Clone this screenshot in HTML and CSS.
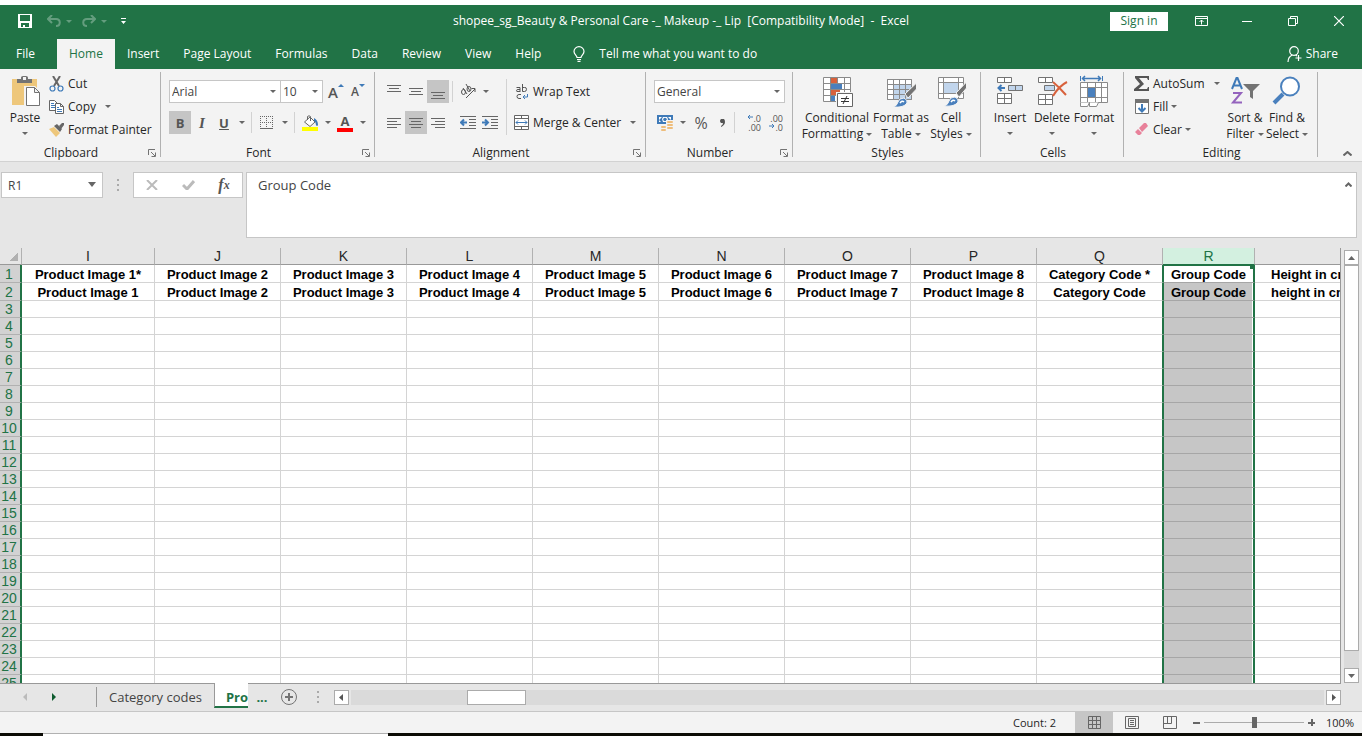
FILE: index.html
```html
<!DOCTYPE html>
<html lang="en">
<head>
    <meta charset="UTF-8">
    <meta name="viewport" content="width=device-width, initial-scale=1.0">
    <title>shopee_sg_Beauty &amp; Personal Care - Excel</title>
    <link rel="stylesheet" href="styles.css">
</head>
<body>
    <div class="window">
        <header class="titlebar">
            <div class="quick">
                <button class="quick-btn save" aria-label="Save">
                    <svg width="14" height="14" viewBox="0 0 14 14"><path fill="#fff" fill-rule="evenodd" d="M0 0h14v14H0zM2 1v6h10V1zM3 9v4h2v-2h2v2h4V9z"/></svg>
                </button>
                <button class="quick-btn dim" aria-label="Undo">
                    <svg width="14" height="12" viewBox="0 0 14 12" fill="none" stroke="#fff" stroke-width="2"><path d="M5 0L1 4l4 4M1 4h8c5 0 5 7 0 7"/></svg>
                    <span class="caret"></span>
                </button>
                <button class="quick-btn dim" aria-label="Redo">
                    <svg width="14" height="12" viewBox="0 0 14 12" fill="none" stroke="#fff" stroke-width="2"><path d="M9 0l4 4-4 4M13 4H5c-5 0-5 7 0 7"/></svg>
                    <span class="caret"></span>
                </button>
                <button class="quick-btn more" aria-label="Customize Quick Access Toolbar">
                    <svg width="6" height="6" viewBox="0 0 6 6" fill="#fff"><path d="M0 0h5v1H0zM0 3h5L2.500 6z"/></svg>
                </button>
            </div>
            <div class="title">shopee_sg_Beauty &amp; Personal Care -_ Makeup -_ Lip&nbsp; [Compatibility Mode]&nbsp; -&nbsp; Excel</div>
            <div class="window-tools">
                <button class="signin">Sign in</button>
                <button class="window-btn" aria-label="Ribbon Display Options">
                    <svg width="13" height="10" viewBox="0 0 13 10" fill="none" stroke="#fff"><path d="M.5.5h12v9H.5zM.5 2.500h12M6.500 8.500V4M4.500 6l2-2 2 2"/></svg>
                </button>
                <button class="window-btn" aria-label="Minimize">
                    <svg width="10" height="10" viewBox="0 0 10 10" fill="none" stroke="#fff"><path d="M0 5.500h10"/></svg>
                </button>
                <button class="window-btn" aria-label="Restore">
                    <svg width="10" height="10" viewBox="0 0 10 10" fill="none" stroke="#fff"><path d="M.5 2.500h7v7h-7zM2.500 2V.5h7v7H8"/></svg>
                </button>
                <button class="window-btn" aria-label="Close">
                    <svg width="10" height="10" viewBox="0 0 10 10" fill="none" stroke="#fff" stroke-width="1.200"><path d="M0 0l10 10M10 0L0 10"/></svg>
                </button>
            </div>
        </header>

        <nav class="tabs">
            <a class="tab file" href="#">File</a>
            <a class="tab active" href="#">Home</a>
            <a class="tab" href="#">Insert</a>
            <a class="tab" href="#">Page Layout</a>
            <a class="tab" href="#">Formulas</a>
            <a class="tab" href="#">Data</a>
            <a class="tab" href="#">Review</a>
            <a class="tab" href="#">View</a>
            <a class="tab" href="#">Help</a>
            <a class="tab tell" href="#">
                <svg width="12" height="16" viewBox="0 0 12 16" fill="none" stroke="#fff" stroke-width="1.200"><path d="M4 11.500c0-2-3-3-3-6a5 4.800 0 0 1 10 0c0 3-3 4-3 6zM4 13.500h4M4.500 15.400h3"/></svg>
                Tell me what you want to do
            </a>
            <a class="tab share" href="#">
                <svg width="15" height="16" viewBox="0 0 15 16" fill="none" stroke="#fff" stroke-width="1.200"><circle cx="7" cy="5" r="4.300"/><path d="M1 16c0-4 2-6 4.500-7M8.500 9l1.500 1M11.500 9v6M8.500 12h6"/></svg>
                Share
            </a>
        </nav>

        <div class="ribbon">
            <section class="group">
                <div class="group-body">
                    <button class="big-btn paste">
                        <svg width="30" height="32" viewBox="0 0 30 32"><path fill="#eec77b" d="M2 4h25v26H2z"/><path fill="#737373" d="M7 8V4h4V2.500Q11 1 13 1h3q2 0 2 1.500V4h4v4z"/><path fill="#f3f3f3" d="M13 2h3v3h-3z"/><path fill="#f3f3f3" d="M14 11h11l5 5v16H14z"/><path fill="#fff" stroke="#737373" d="M16.500 12.500h8l5 5v13h-13zM24.500 12.500v5h5"/></svg>
                        Paste
                        <span class="caret"></span>
                    </button>
                    <div class="stack">
                        <button class="small-btn">
                            <svg width="16" height="16" viewBox="0 0 16 16" fill="none"><path stroke="#666" stroke-width="2" d="M4 0l6 10M11 0L5 10"/><circle cx="3.500" cy="12.500" r="2.500" stroke="#3f7ab8" stroke-width="1.200"/><circle cx="11.500" cy="12.500" r="2.500" stroke="#3f7ab8" stroke-width="1.200"/></svg>
                            Cut
                        </button>
                        <button class="small-btn copy">
                            <svg width="16" height="16" viewBox="0 0 16 16" fill="#fff"><path stroke="#666" d="M.5 1.500h5l3 3v7h-8z"/><path stroke="#3f7ab8" d="M2 4.500h3M2 6.500h4M2 8.500h4"/><path stroke="#666" d="M6.500 4.500h5l3 3v7h-8zM11.500 4.500v3h3"/><path stroke="#3f7ab8" d="M8 8.500h2M8 10.500h5M8 12.500h5"/></svg>
                            Copy
                            <span class="caret"></span>
                        </button>
                        <button class="small-btn">
                            <svg width="16" height="16" viewBox="0 0 16 16"><path fill="#eec77b" d="M0 7l5-2 6 6-4 4z"/><path fill="#666" d="M5 4l3-2 5 5-2 3z"/><path fill="#666" d="M10 4l3-3h2v2l-3 4z"/></svg>
                            Format Painter
                        </button>
                    </div>
                </div>
                <div class="group-label">
                    <span>Clipboard</span>
                    <button aria-label="Clipboard settings"><svg width="8" height="8" viewBox="0 0 8 8" fill="none" stroke="#737373"><path d="M.5 6V.5H7M3 3l4 4M7.500 3.500v4h-4"/></svg></button>
                </div>
            </section>

            <section class="group">
                <div class="group-body rows">
                    <div class="row">
                        <div class="combo font-name"><select aria-label="Font"><option>Arial</option></select></div>
                        <div class="combo font-size"><select aria-label="Font size"><option>10</option></select></div>
                        <button class="icon-btn grow" aria-label="Increase font size">A<svg width="6" height="3" viewBox="0 0 6 3"><path fill="#3f7ab8" d="M0 3l3-3 3 3z"/></svg></button>
                        <button class="icon-btn shrink" aria-label="Decrease font size">A<svg width="6" height="3" viewBox="0 0 6 3"><path fill="#3f7ab8" d="M0 0l3 3 3-3z"/></svg></button>
                    </div>
                    <div class="row">
                        <button class="icon-btn on" aria-label="Bold"><b>B</b></button>
                        <button class="icon-btn" aria-label="Italic"><i>I</i></button>
                        <button class="icon-btn" aria-label="Underline"><u>U</u></button>
                        <button class="drop-btn" aria-label="Underline options"><span class="caret"></span></button>
                        <span class="sep"></span>
                        <button class="icon-btn" aria-label="Borders">
                            <svg width="14" height="14" viewBox="0 0 14 14" fill="none" stroke="#666"><path stroke-dasharray="1 1" d="M0 .5h13M0 6.500h13M.5 0v12M6.500 0v12M12.500 0v12"/><path d="M0 12.500h13"/></svg>
                        </button>
                        <button class="drop-btn" aria-label="Border options"><span class="caret"></span></button>
                        <span class="sep"></span>
                        <button class="icon-btn" aria-label="Fill color">
                            <svg width="16" height="16" viewBox="0 0 16 16"><path fill="#ff0" d="M0 12h16v4H0z"/><path fill="#fff" stroke="#666" d="M2.500 7L8 2l5 5-5 4.500z"/><path fill="none" stroke="#666" d="M5.500 5V1.500Q7 0 8.500 1.500V6"/><path fill="#3f7ab8" d="M12 3q4 2 4 7-1 2-2 0 0-3-2-4z"/></svg>
                        </button>
                        <button class="drop-btn" aria-label="Fill color options"><span class="caret"></span></button>
                        <button class="icon-btn font-color" aria-label="Font color"><b>A</b></button>
                        <button class="drop-btn" aria-label="Font color options"><span class="caret"></span></button>
                    </div>
                </div>
                <div class="group-label">
                    <span>Font</span>
                    <button aria-label="Font settings"><svg width="8" height="8" viewBox="0 0 8 8" fill="none" stroke="#737373"><path d="M.5 6V.5H7M3 3l4 4M7.500 3.500v4h-4"/></svg></button>
                </div>
            </section>

            <section class="group">
                <div class="group-body align">
                    <div class="rows">
                        <div class="row">
                            <button class="icon-btn" aria-label="Top align"><svg width="14" height="14" viewBox="0 0 14 14" stroke="#666"><path d="M0 .5h14M2 3.500h10M0 6.500h14"/></svg></button>
                            <button class="icon-btn" aria-label="Middle align"><svg width="14" height="14" viewBox="0 0 14 14" stroke="#666"><path d="M0 3.500h14M2 6.500h10M0 9.500h14"/></svg></button>
                            <button class="icon-btn on" aria-label="Bottom align"><svg width="14" height="14" viewBox="0 0 14 14" stroke="#666"><path d="M0 7.500h14M2 10.500h10M0 13.500h14"/></svg></button>
                            <span class="sep"></span>
                            <button class="icon-btn" aria-label="Orientation">
                                <svg width="16" height="16" viewBox="0 0 16 16" fill="none" stroke="#555"><ellipse cx="3.500" cy="8" rx="2" ry="2.500"/><path d="M3 4l4 6M6 0l4 7"/><ellipse cx="9" cy="5" rx="2" ry="2.500"/><path d="M6 14l9-9M11.500 4.500H15V8"/></svg>
                            </button>
                            <button class="drop-btn" aria-label="Orientation options"><span class="caret"></span></button>
                        </div>
                        <div class="row">
                            <button class="icon-btn" aria-label="Align left"><svg width="14" height="12" viewBox="0 0 14 12" stroke="#666"><path d="M0 1.500h14M0 4.500h10M0 7.500h14M0 10.500h10"/></svg></button>
                            <button class="icon-btn on" aria-label="Center"><svg width="14" height="12" viewBox="0 0 14 12" stroke="#666"><path d="M0 1.500h14M2 4.500h10M0 7.500h14M2 10.500h10"/></svg></button>
                            <button class="icon-btn" aria-label="Align right"><svg width="14" height="12" viewBox="0 0 14 12" stroke="#666"><path d="M0 1.500h14M4 4.500h10M0 7.500h14M4 10.500h10"/></svg></button>
                            <span class="sep blank"></span>
                            <button class="icon-btn" aria-label="Decrease indent">
                                <svg width="16" height="13" viewBox="0 0 16 13" fill="none" stroke="#666"><path d="M0 .5h16M9 3.500h7M9 6.500h7M9 9.500h7M0 12.500h16"/><path stroke="#3f7ab8" stroke-width="2" d="M7 6.500H1M4 3.500l-3 3 3 3"/></svg>
                            </button>
                            <button class="icon-btn" aria-label="Increase indent">
                                <svg width="16" height="13" viewBox="0 0 16 13" fill="none" stroke="#666"><path d="M0 .5h16M9 3.500h7M9 6.500h7M9 9.500h7M0 12.500h16"/><path stroke="#3f7ab8" stroke-width="2" d="M0 6.500h6M3 3.500l3 3-3 3"/></svg>
                            </button>
                        </div>
                    </div>
                    <span class="sep tall"></span>
                    <div class="rows">
                        <button class="small-btn">
                            <svg width="16" height="16" viewBox="0 0 16 16" fill="none" stroke="#555"><path d="M2.500 3.500h3.500V8M6 5.500H4q-1.500 0-1.500 1.200T4 7.500h2M8.500 0v7.500h2q2 0 2-2.200T10.500 3.500h-2M7 10.500H5q-2 0-2 2t2 2h2"/><path stroke="#3f7ab8" d="M13.500 10v3H9M11 11l-2 2 2 2"/></svg>
                            Wrap Text
                        </button>
                        <button class="small-btn merge">
                            <svg width="16" height="16" viewBox="0 0 16 16" fill="#fff" stroke="#666"><path d="M.5.500h14v14H.5zM.5 3.500h14M.5 11.500h14M7.500 0v3M7.500 12v3"/><path fill="none" stroke="#3f7ab8" d="M2 7.500h11M4 5.500l-2 2 2 2M11 5.500l2 2-2 2"/></svg>
                            Merge &amp; Center
                            <span class="caret"></span>
                        </button>
                    </div>
                </div>
                <div class="group-label">
                    <span>Alignment</span>
                    <button aria-label="Alignment settings"><svg width="8" height="8" viewBox="0 0 8 8" fill="none" stroke="#737373"><path d="M.5 6V.5H7M3 3l4 4M7.500 3.500v4h-4"/></svg></button>
                </div>
            </section>

            <section class="group">
                <div class="group-body rows">
                    <div class="row">
                        <div class="combo number-format"><select aria-label="Number format"><option>General</option></select></div>
                    </div>
                    <div class="row">
                        <button class="icon-btn" aria-label="Accounting format">
                            <svg width="17" height="17" viewBox="0 0 17 17"><path fill="#3f7ab8" d="M0 1h16v9H0z"/><path fill="#fff" d="M2 3h3L2 6zM14 3h-3l3 3zM2 8h2L2 6zM6 3h4l1 2-1 3H6L5 5z"/><circle cx="8" cy="5.500" r="1.800" fill="#3f7ab8"/><path fill="#f3f3f3" d="M9 6h8v9H9v2H3v-6h6z"/><rect x="10" y="7" width="6" height="2" rx="1" fill="#eebd7b"/><rect x="10" y="10" width="6" height="2" rx="1" fill="#eebd7b"/><rect x="10" y="13" width="6" height="2" rx="1" fill="#eebd7b"/><rect x="4" y="12" width="5" height="2" rx="1" fill="#eebd7b"/><rect x="4" y="15" width="5" height="2" rx="1" fill="#eebd7b"/></svg>
                        </button>
                        <button class="drop-btn" aria-label="Accounting options"><span class="caret"></span></button>
                        <button class="icon-btn percent" aria-label="Percent style">%</button>
                        <button class="icon-btn comma" aria-label="Comma style"><svg width="5" height="8" viewBox="0 0 5 8"><path fill="#555" d="M1 0h3q1 1 1 3 0 3-4 5V7q2-1 2-3H1q-1-1-1-2t1-2z"/></svg></button>
                        <span class="sep"></span>
                        <button class="icon-btn decimal" aria-label="Increase decimal"><span><svg width="6" height="6" viewBox="0 0 6 6" fill="none" stroke="#3f7ab8"><path d="M6 3H1M3 1L1 3l2 2"/></svg>.0</span><span>.00</span></button>
                        <button class="icon-btn decimal" aria-label="Decrease decimal"><span>.00</span><span><svg width="6" height="6" viewBox="0 0 6 6" fill="none" stroke="#3f7ab8"><path d="M0 3h5M3 1l2 2-2 2"/></svg>.0</span></button>
                    </div>
                </div>
                <div class="group-label">
                    <span>Number</span>
                    <button aria-label="Number settings"><svg width="8" height="8" viewBox="0 0 8 8" fill="none" stroke="#737373"><path d="M.5 6V.5H7M3 3l4 4M7.500 3.500v4h-4"/></svg></button>
                </div>
            </section>

            <section class="group">
                <div class="group-body styles">
                    <button class="big-btn">
                        <svg width="32" height="32" viewBox="0 0 32 32"><path fill="#fff" stroke="#8a8a8a" d="M2.500 2.500h27v24h-27zM2.500 8.500h27M2.500 14.500h27M2.500 20.500h27M9.500 2.500v24M16.500 2.500v24M23.500 2.500v24"/><path fill="#d8613c" d="M10 3h6v5h-6zM10 15h9v5h-9z"/><path fill="#4a80bd" d="M10 9h11v5H10zM10 21h4v5h-4z"/><path fill="#f3f3f3" d="M15 17h17v15H15z"/><path fill="#fff" stroke="#666" d="M16.500 18.500h15v13h-15z"/><path fill="none" stroke="#333" d="M20 23.500h8M20 26.500h8M26 21l-4 8"/></svg>
                        <span>Conditional<br>Formatting <span class="caret"></span></span>
                    </button>
                    <button class="big-btn">
                        <svg width="32" height="32" viewBox="0 0 32 32"><path fill="#fff" stroke="#8a8a8a" d="M2.500 4.500h24v20h-24z"/><path fill="#c1d5ec" d="M9 10h17v15H9z"/><path fill="none" stroke="#8a8a8a" d="M2.500 4.500h24v20h-24zM2.500 9.500h24M2.500 14.500h24M2.500 19.500h24M8.500 4.500v20M14.500 4.500v20M20.500 4.500v20"/><path stroke="#f3f3f3" fill="#737373" d="M31.500 8L20 19l3 4 8.500-9z"/><path fill="#4a80bd" stroke="#f3f3f3" d="M8 32q4-1 5-5t6-4q4 2 3 5-3 5-14 4z"/><path fill="none" stroke="#fff" stroke-width="1.500" d="M15 28q2-3 4-1"/></svg>
                        <span>Format as<br>Table <span class="caret"></span></span>
                    </button>
                    <button class="big-btn">
                        <svg width="32" height="32" viewBox="0 0 32 32"><path fill="#fff" stroke="#8a8a8a" d="M3.500 2.500h25v21h-25zM3.500 7.500h25M3.500 18.500h25M8.500 2.500v21M23.500 2.500v21"/><path fill="#c1d5ec" d="M9 8h14v10H9z"/><path stroke="#f3f3f3" fill="#737373" d="M31.500 7L21 18l3 4 7.500-9z"/><path fill="#4a80bd" stroke="#f3f3f3" d="M9 31q4-1 5-5t6-4q4 2 3 5-3 5-14 4z"/><path fill="none" stroke="#fff" stroke-width="1.500" d="M16 27q2-3 4-1"/></svg>
                        <span>Cell<br>Styles <span class="caret"></span></span>
                    </button>
                </div>
                <div class="group-label"><span>Styles</span></div>
            </section>

            <section class="group">
                <div class="group-body cells">
                    <button class="big-btn">
                        <svg width="32" height="32" viewBox="0 0 32 32"><path fill="#fff" stroke="#737373" d="M3.500 2.500h14v5h-14zM10.500 2.500v5M3.500 18.500h14v10h-14zM10.500 18.500v10M3.500 23.500h14"/><path fill="#c1d5ec" stroke="#737373" d="M14.500 10.500h14v5h-14zM21.500 10.500v5"/><path fill="none" stroke="#3f7ab8" stroke-width="2" d="M11 13H5M7.500 10l-3 3 3 3"/></svg>
                        Insert
                        <span class="caret"></span>
                    </button>
                    <button class="big-btn">
                        <svg width="32" height="32" viewBox="0 0 32 32"><path fill="#fff" stroke="#737373" d="M2.500 2.500h14v5h-14zM9.500 2.500v5M2.500 19.500h14v10h-14zM9.500 19.500v10M2.500 24.500h14"/><path fill="#c1d5ec" stroke="#737373" d="M8.500 10.500h10v5h-10z"/><path fill="none" stroke="#d8613c" stroke-width="2" d="M17 7q6 5 13 13M31 7q-8 4-14 14"/></svg>
                        Delete
                        <span class="caret"></span>
                    </button>
                    <button class="big-btn">
                        <svg width="32" height="32" viewBox="0 0 32 32"><path fill="none" stroke="#3f7ab8" d="M2.500 1v5M24.500 1v5"/><path fill="none" stroke="#3f7ab8" stroke-width="1.500" d="M4 3.500h19M7 1L4.500 3.500 7 6M20 1l2.500 2.500L20 6"/><path fill="#fff" stroke="#8a8a8a" d="M2.500 7.500h27v20h-27zM2.500 12.500h27M2.500 22.500h27M9.500 7.500v20M17.500 7.500v20M23.500 7.500v20"/><path fill="#4a80bd" d="M10 13h7v9h-7z"/><path fill="#fff" stroke="#8a8a8a" d="M2.500 27.500v4h7l2-4M11.500 27.500v4h7l2-4"/></svg>
                        Format
                        <span class="caret"></span>
                    </button>
                </div>
                <div class="group-label"><span>Cells</span></div>
            </section>

            <section class="group">
                <div class="group-body editing">
                    <div class="stack">
                        <button class="small-btn autosum">
                            <svg width="16" height="16" viewBox="0 0 16 16"><path fill="#555" d="M1 0h14v4h-1l-1-2H5l5 6-5.500 5H13l1-2h1v4H0v-2l6-5-5-6z"/></svg>
                            AutoSum
                            <span class="caret"></span>
                        </button>
                        <button class="small-btn">
                            <svg width="16" height="16" viewBox="0 0 16 16"><path fill="#fff" stroke="#737373" d="M1.500.500h13v14h-13z"/><path fill="#737373" d="M1 0h14v4H1z"/><path fill="none" stroke="#3f7ab8" stroke-width="2" d="M8 5v7M4.500 9L8 12.500 11.500 9"/></svg>
                            Fill <span class="caret"></span>
                        </button>
                        <button class="small-btn">
                            <svg width="16" height="16" viewBox="0 0 16 16"><path fill="#e8819a" d="M5 6l5-5h2l2 3-6 6zM1 10l3-3 4 4-2 2H4z"/></svg>
                            Clear <span class="caret"></span>
                        </button>
                    </div>
                    <button class="big-btn">
                        <svg width="32" height="32" viewBox="0 0 32 32" fill="none" stroke-width="2"><path stroke="#3f7ab8" d="M3 14L7.500 3h1L13 14M4.500 10.500h7"/><path stroke="#9463bd" d="M4 18h8L4 27.500h9"/><path fill="#737373" stroke="none" d="M14 9h17l-7 7v8l-3-2v-6z"/></svg>
                        <span>Sort &amp;<br>Filter <span class="caret"></span></span>
                    </button>
                    <button class="big-btn">
                        <svg width="32" height="32" viewBox="0 0 32 32"><path stroke="#4a80bd" stroke-width="4" d="M3 28l9-9"/><circle cx="19" cy="11.500" r="9" fill="#fff" stroke="#4a80bd" stroke-width="2"/></svg>
                        <span>Find &amp;<br>Select <span class="caret"></span></span>
                    </button>
                </div>
                <div class="group-label"><span>Editing</span></div>
            </section>

            <button class="collapse" aria-label="Collapse the Ribbon"><svg width="9" height="5" viewBox="0 0 9 5" fill="none" stroke="#666" stroke-width="2"><path d="M.5 4.500l4-3.500 4 3.500"/></svg></button>
        </div>

        <div class="formula-bar">
            <div class="combo name-box"><input type="text" aria-label="Name Box" value="R1"></div>
            <span class="dots"></span>
            <div class="formula-tools">
                <button aria-label="Cancel"><svg width="12" height="10" viewBox="0 0 12 10" fill="none" stroke="#bbb" stroke-width="2"><path d="M1 0l10 10M11 0L1 10"/></svg></button>
                <button aria-label="Enter"><svg width="13" height="10" viewBox="0 0 13 10" fill="none" stroke="#bbb" stroke-width="3"><path d="M1 5l4 4 7-8"/></svg></button>
                <button class="fx" aria-label="Insert Function">f<small>x</small></button>
            </div>
            <div class="formula-field">
                <textarea aria-label="Formula Bar">Group Code</textarea>
                <button aria-label="Collapse Formula Bar"><svg width="7" height="5" viewBox="0 0 7 5" fill="none" stroke="#666" stroke-width="2"><path d="M.5 4.500l3-3 3 3"/></svg></button>
            </div>
        </div>

        <main class="sheet">
            <div class="grid">
                <table>
                    <colgroup>
                        <col class="col-head"><col class="col-first"><col class="col"><col class="col"><col class="col"><col class="col"><col class="col"><col class="col"><col class="col"><col class="col"><col class="col-selected"><col>
                    </colgroup>
                    <thead>
                        <tr>
                            <th class="corner"></th><th>I</th><th>J</th><th>K</th><th>L</th><th>M</th><th>N</th><th>O</th><th>P</th><th>Q</th><th class="selected">R</th><th></th>
                        </tr>
                    </thead>
                    <tbody>
                        <tr class="titles">
                            <th>1</th><td>Product Image 1*</td><td>Product Image 2</td><td>Product Image 3</td><td>Product Image 4</td><td>Product Image 5</td><td>Product Image 6</td><td>Product Image 7</td><td>Product Image 8</td><td>Category Code *</td><td class="active-cell">Group Code<span class="handle"></span></td><td>Height in cm</td>
                        </tr>
                        <tr class="titles">
                            <th>2</th><td>Product Image 1</td><td>Product Image 2</td><td>Product Image 3</td><td>Product Image 4</td><td>Product Image 5</td><td>Product Image 6</td><td>Product Image 7</td><td>Product Image 8</td><td>Category Code</td><td>Group Code</td><td>height in cm</td>
                        </tr>
                    </tbody>
                </table>
            </div>
            <div class="v-scroll">
                <button class="scroll-btn" aria-label="Scroll up"><svg width="7" height="4" viewBox="0 0 7 4"><path fill="#666" d="M0 4l3.500-4L7 4z"/></svg></button>
                <div class="thumb"></div>
                <button class="scroll-btn" aria-label="Scroll down"><svg width="7" height="4" viewBox="0 0 7 4"><path fill="#666" d="M0 0l3.500 4L7 0z"/></svg></button>
            </div>
        </main>

        <div class="sheet-bar">
            <div class="sheet-nav">
                <button aria-label="Previous sheet"><svg width="4" height="8" viewBox="0 0 4 8"><path fill="#bbb" d="M4 0v8L0 4z"/></svg></button>
                <button aria-label="Next sheet"><svg width="4" height="8" viewBox="0 0 4 8"><path fill="#0e5c2f" d="M0 0v8l4-4z"/></svg></button>
            </div>
            <a class="sheet-tab" href="#">Category codes</a>
            <a class="sheet-tab active" href="#">Prod</a>
            <button class="more-sheets" aria-label="More sheets">...</button>
            <button class="new-sheet" aria-label="New sheet"><svg width="16" height="16" viewBox="0 0 16 16" fill="none" stroke="#737373"><circle cx="8" cy="8" r="7.500"/><path stroke-width="2" d="M4 8h8M8 4v8"/></svg></button>
            <span class="dots"></span>
            <div class="h-scroll">
                <button class="scroll-btn" aria-label="Scroll left"><svg width="4" height="7" viewBox="0 0 4 7"><path fill="#555" d="M4 0v7L0 3.500z"/></svg></button>
                <div class="track"><div class="thumb"></div></div>
                <button class="scroll-btn" aria-label="Scroll right"><svg width="4" height="7" viewBox="0 0 4 7"><path fill="#555" d="M0 0v7l4-3.500z"/></svg></button>
            </div>
        </div>

        <footer class="status">
            <span class="count">Count: 2</span>
            <button class="view-btn on" aria-label="Normal view"><svg width="13" height="13" viewBox="0 0 13 13" fill="none" stroke="#666"><path d="M.5.500h12v12H.5zM.5 4.500h12M.5 8.500h12M4.500.500v12M8.500.500v12"/></svg></button>
            <button class="view-btn" aria-label="Page Layout view"><svg width="14" height="13" viewBox="0 0 14 13" fill="none" stroke="#666"><path d="M.5.500h13v12H.5zM3.500 2.500h7v8h-7zM5 4.500h4M5 6.500h4M5 8.500h4"/></svg></button>
            <button class="view-btn" aria-label="Page Break view"><svg width="14" height="13" viewBox="0 0 14 13" fill="none" stroke="#666"><path d="M.5.500h13v12H.5zM.5 7.500h8V.5M4.500 0v7"/></svg></button>
            <button class="zoom-btn" aria-label="Zoom out"><svg width="7" height="7" viewBox="0 0 7 7"><path fill="#666" d="M0 3h7v2H0z"/></svg></button>
            <input class="zoom" type="range" min="0" max="100" value="50" aria-label="Zoom">
            <button class="zoom-btn" aria-label="Zoom in"><svg width="7" height="7" viewBox="0 0 7 7"><path fill="#666" d="M0 3h7v2H0zM3 0h2v7H3z"/></svg></button>
            <span class="zoom-value">100%</span>
        </footer>
        <div class="edge"><span></span></div>
    </div>
    <script>
        // Empty rows under the two title rows
        const body = document.querySelector('tbody');
        for (let i = 3; i <= 25; i++) {
            const row = document.createElement('tr');
            row.innerHTML = `<th>${i}</th>` + '<td></td>'.repeat(11);
            body.appendChild(row);
        }
    </script>
</body>
</html>
```
FILE: styles.css
```css
* {
    box-sizing: border-box;
}

body {
    margin: 0;
    padding: 5px 4px 0 0;
    height: 100vh;
    overflow: hidden;
    background-color: #fff;
    color: #262626;
    font-family: "Open Sans", "Noto Sans", sans-serif;
    font-size: 12px;
    line-height: 16px;
}

button, input, select, textarea {
    font: inherit;
    color: inherit;
    background: none;
    border: none;
    padding: 0;
    margin: 0;
    border-radius: 0;
}

button {
    display: flex;
    align-items: center;
    justify-content: center;
    white-space: nowrap;
}

svg {
    display: block;
    flex: none;
}

a {
    color: inherit;
    text-decoration: none;
}

.window {
    display: flex;
    flex-direction: column;
    height: 100%;
    background-color: #e6e6e6;
}

.caret {
    display: inline-block;
    flex: none;
    border: 3px solid transparent;
    border-top-color: #666;
    border-bottom: none;
    vertical-align: middle;
}

/* title bar */
.titlebar {
    display: grid;
    grid-template-columns: 1fr auto 1fr;
    align-items: center;
    height: 34px;
    padding-bottom: 2px;
    background-color: #217346;
    color: #fff;
}

.quick {
    display: flex;
    align-items: center;
    padding-left: 18px;
    gap: 10px;
}

.quick-btn {
    gap: 5px;
}

.quick-btn .caret {
    border-top-color: #fff;
}

.quick-btn.save {
    margin-right: 5px;
}

.quick-btn.more {
    margin-left: 4px;
}

.dim {
    opacity: 0.3;
}

.window-tools {
    display: flex;
    justify-content: flex-end;
    align-items: center;
}

.signin {
    width: 58px;
    height: 19px;
    margin-right: 10px;
    background-color: #fff;
    color: #217346;
}

.window-btn {
    width: 46px;
    height: 30px;
}

/* ribbon tabs */
.tabs {
    display: flex;
    height: 30px;
    background-color: #217346;
    color: #fff;
}

.tab {
    display: flex;
    align-items: center;
    padding: 0 12px;
}

.tab.file {
    padding: 0 22px 0 16px;
}

.tab.active {
    background-color: #f3f3f3;
    color: #217346;
}

.tab.tell {
    gap: 14px;
    padding-left: 20px;
}

.tab.share {
    gap: 4px;
    margin-left: auto;
    padding-right: 24px;
}

/* ribbon */
.ribbon {
    display: grid;
    grid-template-columns: 161px 214px 271px 147px 188px 143px 194px 1fr;
    height: 93px;
    background-color: #f3f3f3;
    border-bottom: 1px solid #d2d2d2;
}

.group {
    display: flex;
    flex-direction: column;
    margin: 3px 0 4px;
    border-right: 1px solid #b1b1b1;
}

.group-body {
    display: flex;
    height: 77px;
    padding-left: 8px;
}

.group-label {
    display: flex;
    align-items: center;
    height: 8px;
    padding-right: 4px;
}

.group-label span {
    flex: 1;
    padding-right: 6px;
    text-align: center;
}

.group-label span:only-child {
    padding: 0 0 0 6px;
}

.rows {
    display: flex;
    flex-direction: column;
    gap: 8px;
    padding-top: 8px;
}

.row {
    display: flex;
    align-items: center;
    height: 23px;
}

.stack {
    display: flex;
    flex-direction: column;
}

.small-btn {
    justify-content: flex-start;
    gap: 3px;
    height: 23px;
}

.copy .caret, .merge .caret, .autosum .caret {
    margin-left: 6px;
}

.big-btn {
    flex-direction: column;
    justify-content: flex-start;
    width: 42px;
    padding-top: 3px;
    gap: 3px;
}

.big-btn > .caret {
    margin-top: 3px;
}

.paste {
    margin-right: 7px;
    width: 34px;
}

.styles .big-btn {
    width: 44px;
}

.styles .big-btn:nth-child(1) {
    width: 72px;
}

.styles .big-btn:nth-child(2) {
    width: 56px;
}

.editing {
    padding-left: 10px;
}

.editing .stack {
    width: 90px;
}

.icon-btn {
    width: 22px;
    height: 23px;
    color: #555;
    font-size: 13px;
}

.icon-btn.on {
    background-color: #c5c5c5;
}

.icon-btn i {
    font-family: "Liberation Serif", serif;
    font-size: 15px;
    font-weight: bold;
}

.icon-btn u {
    font-weight: bold;
}

.grow, .shrink {
    font-size: 15px;
    font-weight: 600;
}

.grow {
    margin-left: 2px;
}

.grow svg, .shrink svg {
    align-self: flex-start;
    margin-top: 4px;
}

.shrink {
    font-size: 12px;
}

.font-color b {
    width: 16px;
    line-height: 14px;
    border-bottom: 4px solid #f00;
}

.percent {
    width: 24px;
    font-size: 16px;
}

.comma {
    width: 18px;
}

.decimal {
    flex-direction: column;
    align-items: flex-end;
    font-size: 9px;
    line-height: 9px;
}

.decimal span {
    display: flex;
}

.drop-btn {
    width: 13px;
    height: 23px;
}

.sep {
    width: 1px;
    height: 21px;
    margin: 0 4px 0 3px;
    background-color: #d2d2d2;
}

.sep.blank {
    background: none;
}

.sep.tall {
    height: 56px;
    margin: 7px 7px 0 4px;
}

.align .rows:first-child {
    width: 119px;
}

/* drop-down fields */
.combo {
    position: relative;
    height: 23px;
    border: 1px solid #c6c6c6;
    background-color: #fff;
}

.combo select, .combo input {
    width: 100%;
    height: 100%;
    padding-left: 2px;
    color: #444;
    appearance: none;
}

.combo::after {
    content: "";
    position: absolute;
    right: 4px;
    top: 9px;
    border: 3px solid transparent;
    border-top-color: #666;
    border-bottom: none;
    pointer-events: none;
}

.font-name {
    width: 112px;
}

.font-size {
    width: 43px;
    margin-left: -1px;
}

.number-format {
    width: 131px;
}

.collapse {
    align-self: end;
    justify-self: end;
    padding: 0 10px 5px 0;
}

/* formula bar */
.formula-bar {
    display: flex;
    align-items: flex-start;
    height: 86px;
    padding: 10px 5px 0 1px;
    font-size: 13px;
}

.name-box {
    width: 102px;
    height: 26px;
}

.name-box input {
    padding-left: 6px;
    font-size: 12px;
}

.name-box::after {
    border-width: 5px 4px 0;
    right: 6px;
}

.dots {
    width: 2px;
    height: 12px;
    background: repeating-linear-gradient(#aaa 0 2px, transparent 2px 5px);
}

.formula-bar .dots {
    margin: 7px 14px 0;
}

.formula-tools {
    display: flex;
    width: 110px;
    height: 26px;
    margin-right: 3px;
    border: 1px solid #c6c6c6;
    background-color: #fff;
}

.formula-tools button {
    flex: 1;
}

.fx {
    color: #555;
    font-family: "Liberation Serif", serif;
    font-size: 16px;
    font-style: italic;
    font-weight: bold;
}

.fx small {
    font-size: 12px;
}

.formula-field {
    display: flex;
    flex: 1;
    align-items: flex-start;
    height: 66px;
    border: 1px solid #c6c6c6;
    background-color: #fff;
}

.formula-field textarea {
    flex: 1;
    height: 100%;
    padding: 4px 11px;
    color: #444;
    resize: none;
}

.formula-field button {
    padding: 9px 4px;
}

/* worksheet */
.sheet {
    display: flex;
    flex: 1;
    min-height: 0;
}

.grid {
    flex: 1;
    min-width: 0;
    overflow: hidden;
    border-right: 1px solid #999;
}

.grid table {
    width: 100%;
    table-layout: fixed;
    border-collapse: separate;
    border-spacing: 0;
    font-family: "Liberation Sans", Arial, sans-serif;
    font-size: 13px;
    line-height: 16px;
}

.col-head {
    width: 22px;
}

.col-first {
    width: 133px;
}

.col {
    width: 126px;
}

.col-selected {
    width: 92px;
}

.grid th, .grid td {
    height: 17px;
    padding: 0;
    overflow: hidden;
    white-space: nowrap;
    border-right: 1px solid #d4d4d4;
    border-bottom: 1px solid #d4d4d4;
}

.grid th {
    font-weight: normal;
}

.grid thead th {
    font-size: 14px;
    border-right-color: #b1b1b1;
    border-bottom-color: #999;
    background-color: #e6e6e6;
}

.grid thead .corner {
    background: linear-gradient(135deg, transparent 50%, #b1b1b1 50%) 9px 4px / 9px 9px no-repeat #e6e6e6;
}

.grid thead .selected {
    color: #217346;
    border-bottom-color: #217346;
    background-color: #d3f0e0;
}

.grid tbody th {
    font-size: 14px;
    padding-right: 2px;
    color: #217346;
    border-right: 2px solid #217346;
    border-bottom-color: #b1b1b1;
    background-color: #d2d2d2;
}

.grid td {
    color: #000;
    text-align: center;
    background-color: #fff;
}

.grid .titles th, .grid .titles td {
    height: 18px;
}

.grid .titles td {
    padding-top: 2px;
    font-weight: bold;
    line-height: 15px;
}

.grid td:nth-child(10) {
    border-right-color: #217346;
}

.grid td:nth-child(11) {
    border-left: 1px solid #217346;
    border-right: 2px solid #217346;
    border-bottom-color: #a6a6a6;
    background-color: #c6c6c6;
    box-shadow: inset -1px 0 #fff;
}

.grid td:nth-child(12), .grid th:nth-child(12) {
    padding-left: 16px;
    border-right: none;
    text-align: left;
}

.grid .titles .active-cell {
    position: relative;
    overflow: visible;
    padding-top: 1px;
    border-top: 1px solid #217346;
    background-color: #fff;
}

.handle {
    position: absolute;
    top: -1px;
    right: -2px;
    width: 5px;
    height: 4px;
    background-color: #217346;
}

/* scroll bars */
.scroll-btn {
    width: 15px;
    height: 15px;
    border: 1px solid #ababab;
    background-color: #fff;
}

.thumb {
    border: 1px solid #ababab;
    background-color: #fff;
}

.v-scroll {
    display: flex;
    flex-direction: column;
    width: 15px;
    margin: 2px 3px 0;
    background-color: #dadada;
}

.v-scroll .thumb {
    flex: 1;
    margin-bottom: 17px;
}

.h-scroll {
    display: flex;
    flex: 1;
    gap: 2px;
    margin-right: 21px;
}

.h-scroll .track {
    flex: 1;
    padding-left: 116px;
    background-color: #dadada;
}

.h-scroll .thumb {
    width: 59px;
    height: 15px;
}

/* sheet tabs */
.sheet-bar {
    display: flex;
    align-items: center;
    height: 28px;
    background: linear-gradient(#999, #999) top left / calc(100% - 21px) 1px no-repeat;
}

.sheet-nav {
    display: flex;
    gap: 25px;
    width: 97px;
    height: 20px;
    padding-left: 23px;
    border-right: 1px solid #999;
}

.sheet-tab {
    padding: 0 12px;
    font-size: 13px;
    color: #444;
}

.sheet-tab.active {
    align-self: flex-start;
    width: 34px;
    height: 25px;
    padding: 6px 0 0 11px;
    overflow: hidden;
    background-color: #fff;
    border-left: 1px solid #999;
    border-bottom: 2px solid #217346;
    color: #217346;
    font-weight: bold;
}

.more-sheets {
    width: 28px;
    color: #217346;
    font-size: 13px;
    font-weight: bold;
}

.new-sheet {
    margin-left: 5px;
}

.sheet-bar .dots {
    margin: 0 15px 0 20px;
}

/* status bar */
.status {
    display: flex;
    align-items: center;
    justify-content: flex-end;
    height: 22px;
    padding-right: 8px;
    border-top: 1px solid #c6c6c6;
    background-color: #f3f3f3;
    font-size: 11px;
}

.count {
    margin-right: 19px;
}

.view-btn {
    width: 38px;
    height: 21px;
}

.view-btn.on {
    background-color: #c6c6c6;
}

.zoom-btn {
    width: 15px;
    height: 21px;
}

.zoom {
    width: 100px;
    height: 11px;
    appearance: none;
    background: linear-gradient(#ababab, #ababab) center / 100% 1px no-repeat;
}

.zoom::-webkit-slider-thumb {
    appearance: none;
    width: 5px;
    height: 11px;
    background-color: #666;
}

.zoom-value {
    margin-left: 7px;
}

/* strip under the window */
.edge {
    height: 3px;
    padding-left: 43px;
    background-color: #0b0b05;
}

.edge span {
    display: block;
    width: 345px;
    height: 3px;
    border-top: 1px solid #b1b1b1;
    background-color: #fff;
}
```
